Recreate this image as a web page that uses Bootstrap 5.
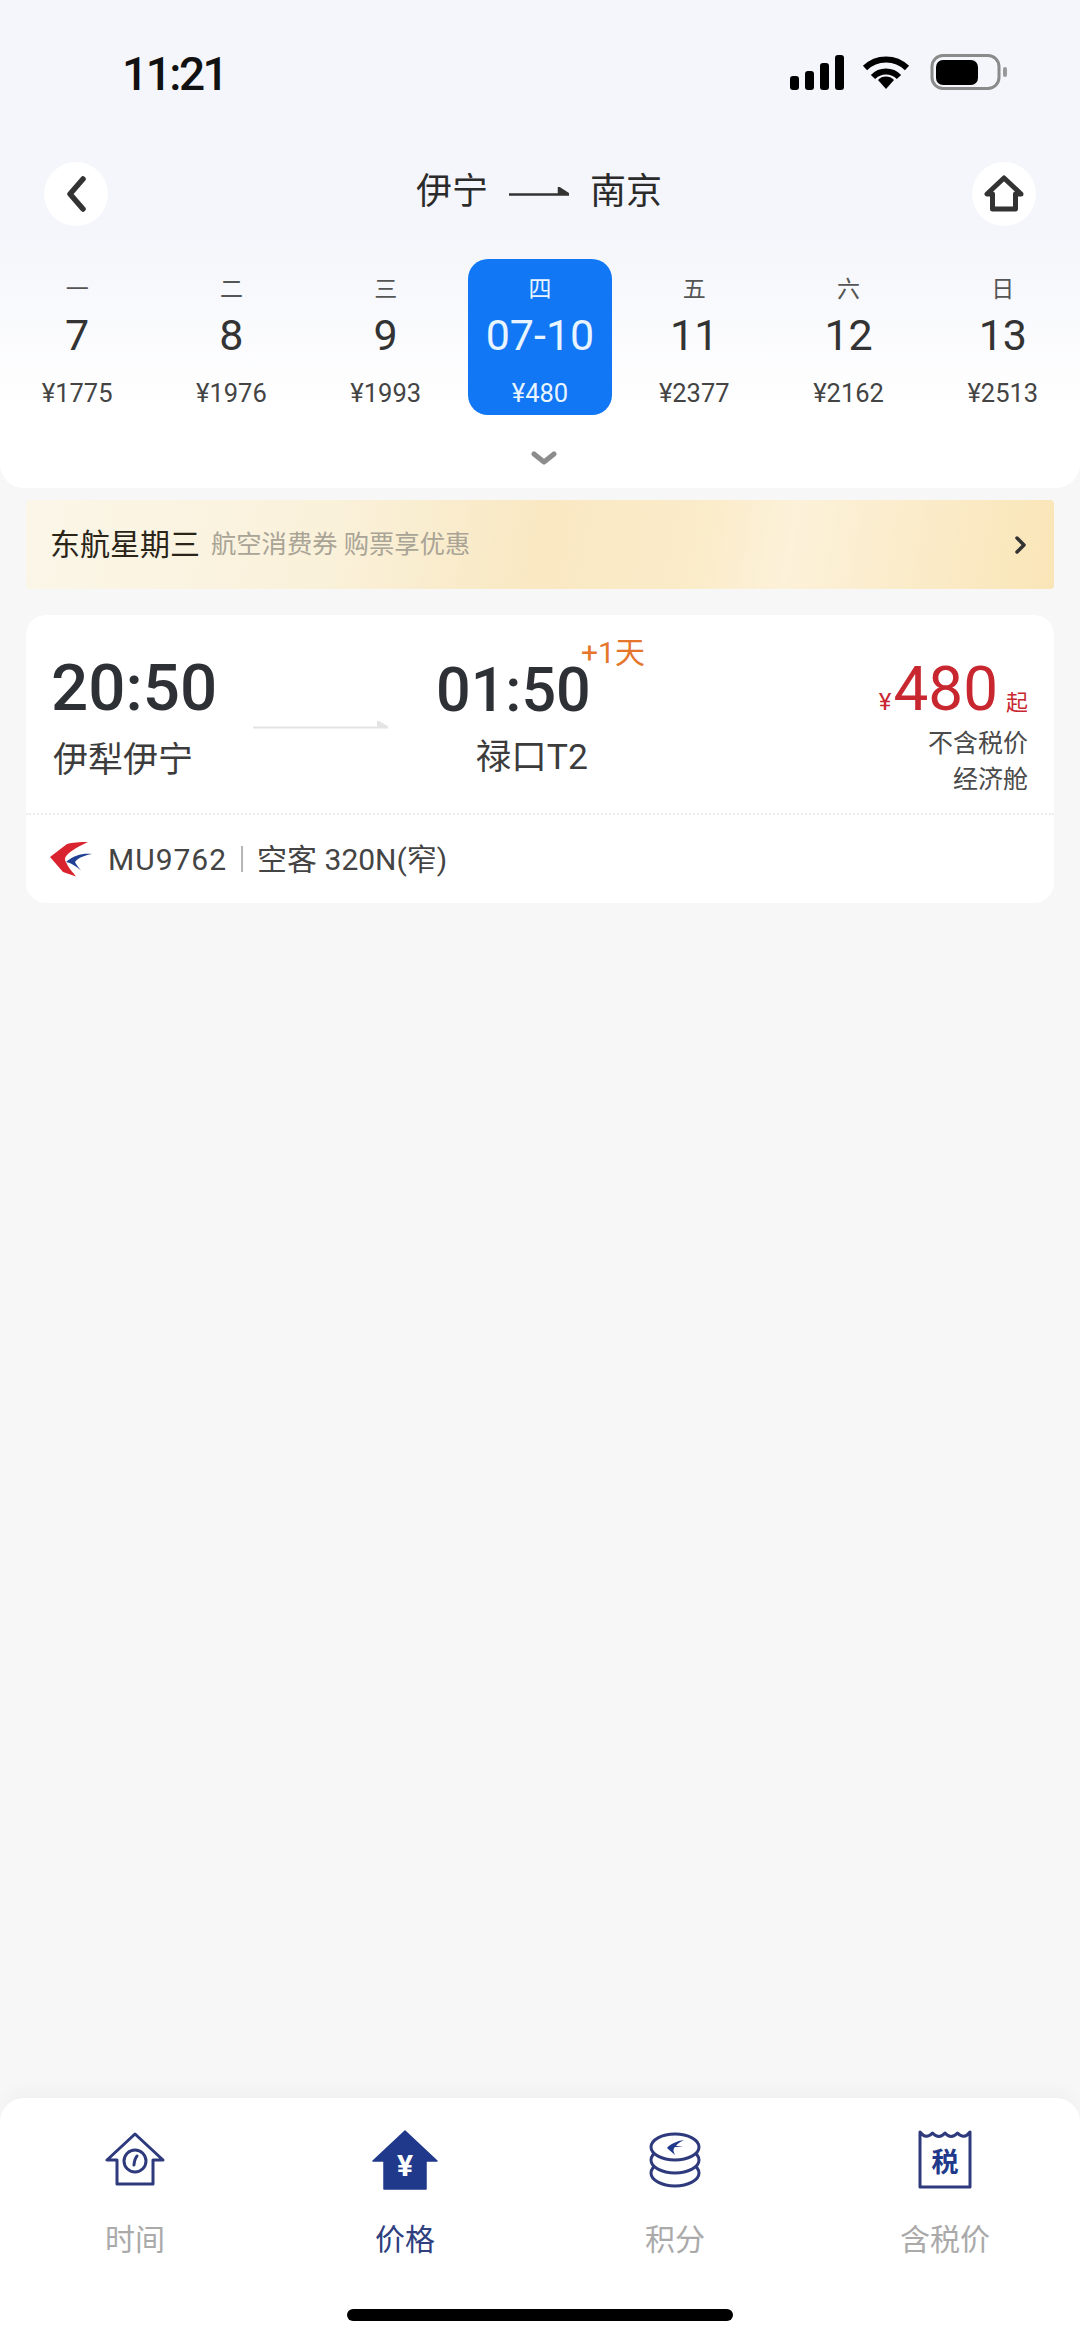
<!DOCTYPE html>
<html lang="zh-CN">
<head>
  <meta charset="UTF-8" />
  <meta name="viewport" content="width=device-width, initial-scale=1.0" />
  <title>航班列表</title>
  <link href="https://cdn.jsdelivr.net/npm/bootstrap@5.3.0/dist/css/bootstrap.min.css" rel="stylesheet">
  <style>
    body {
      font-family: Roboto, "Noto Sans CJK SC", sans-serif;
      background: #f7f7f7;
      color: #333;
    }
    .page-wrap { width: 1080px; height: 2342px; }

    /* header */
    .top-panel {
      background: linear-gradient(to bottom, #f5f6fb 0, #f5f6fb 240px, #ffffff 410px);
      border-radius: 0 0 24px 24px;
      padding-top: 54px;
      padding-bottom: 25px;
    }
    .status-row { height: 36px; padding-left: 122px; padding-right: 73px; }
    .status-time { font-size: 46px; font-weight: 500; line-height: 36px; color: #111; letter-spacing: -2.5px; margin-top: 3px; }
    .nav-row { height: 64px; margin-top: 72px; padding: 0 44px; }
    .round-btn { width: 64px; height: 64px; border-radius: 50%; background: #fff; }
    .route-title { font-size: 36px; line-height: 44px; color: #2b2b2b; gap: 21px; margin-top: -4px; margin-left: -2px; }

    /* dates */
    .date-row { margin-top: 33px; }
    .date-item { width: 144px; height: 156px; margin: 0 auto; border-radius: 20px; padding-top: 20px; text-align: center; }
    .date-item.is-on { background: #1277f4; color: #fff; }
    .date-week { font-size: 23px; line-height: 22px; color: #555; }
    .date-num { font-size: 43px; line-height: 44px; margin-top: 12px; color: #333; white-space: nowrap; }
    .date-price { font-size: 25.5px; line-height: 30px; margin-top: 21px; color: #444; }
    .is-on .date-week, .is-on .date-num, .is-on .date-price { color: #e8f4ff; }
    .more-row { height: 12px; margin-top: 36px; padding-left: 8px; }

    /* promo */
    .promo-bar {
      height: 89px;
      margin: 12px 26px 0;
      padding: 0 27px 0 24px;
      border-radius: 4px;
      background: linear-gradient(100deg, #fbf6e8 0, #faf1da 30%, #f9e8c2 50%, #fbecca 66%, #fcf1d9 74%, #f9e5b7 100%);
    }
    .promo-main { font-size: 30px; color: #2a2419; }
    .promo-sub { font-size: 25.3px; color: #a9a496; margin-left: 11px; }

    /* flight card */
    .flight-box { height: 288px; margin: 26px 26px 0; background: #fff; border-radius: 20px; }
    .flight-top { height: 200px; padding: 38px 26px 0 25px; border-bottom: 2px dotted #ececec; }
    .depart-col { width: 202px; }
    .time-big { font-size: 65.5px; line-height: 70px; font-weight: 500; color: #2d3035; white-space: nowrap; }
    .depart-name { font-size: 35px; line-height: 44px; margin-top: 16px; margin-left: 2px; color: #3c3c3c; }
    .arrow-col { width: 135px; margin-top: 68px; }
    .arrive-col { width: 152px; margin-left: 48px; margin-top: 2px; }
    .arrive-col .time-big { font-size: 61px; }
    .arrive-name { font-size: 35.5px; line-height: 44px; margin-top: 10px; color: #3c3c3c; white-space: nowrap; }
    .plus-day { position: absolute; left: 145px; top: -17px; font-size: 30px; line-height: 30px; color: #e5762b; white-space: nowrap; }
    .price-col { margin-top: 1px; color: #4a4a4a; }
    .price-main { height: 70px; line-height: 70px; color: #c8272f; white-space: nowrap; }
    .price-yen { font-size: 24px; }
    .price-num { font-size: 62px; margin-left: 2px; }
    .price-from { font-size: 22px; margin-left: 8px; }
    .price-note { font-size: 25px; line-height: 36px; }
    .price-note-first { margin-top: 2px; }
    .flight-info { height: 88px; padding-left: 24px; font-size: 30px; color: #444; }
    .info-num { letter-spacing: 1px; }
    .info-sep { width: 2px; height: 26px; background: #b5b5b5; margin: 0 14px; }

    /* bottom tabs */
    .tab-bar { height: 244px; background: #fff; border-radius: 24px 24px 0 0; box-shadow: 0 -10px 14px rgba(0,0,0,0.025); }
    .tab-icon { height: 60px; margin-top: 32px; }
    .tab-label { font-size: 30px; line-height: 36px; color: #aaa; margin-top: 32px; text-align: center; }
    .tab-label.is-on { color: #2f3f7f; }
    .home-bar { width: 386px; height: 12px; border-radius: 6px; background: #000; margin: 51px auto 0; }
    .tab-glyph { font-family: Roboto, "Noto Sans CJK SC", sans-serif; font-weight: 700; }
  </style>
</head>
<body>
  <div class="page-wrap d-flex flex-column">
    <div class="top-panel">
      <!-- status bar -->
      <div class="status-row d-flex justify-content-between align-items-center">
        <span class="status-time">11:21</span>
        <svg width="217" height="36" viewBox="0 0 217 36">
          <rect x="0" y="22" width="9" height="14" rx="3" fill="#000"/>
          <rect x="15" y="17" width="9" height="19" rx="3" fill="#000"/>
          <rect x="30" y="9" width="9" height="27" rx="3" fill="#000"/>
          <rect x="45" y="1" width="9" height="35" rx="3" fill="#000"/>
          <g transform="translate(72 1)" fill="none" stroke="#000" stroke-width="6">
            <path d="M3 13 A30 30 0 0 1 45 13"/>
            <path d="M11 22 A18 18 0 0 1 37 22"/>
            <path d="M24 34 L16 25 A11 11 0 0 1 32 25Z" fill="#000" stroke="none"/>
          </g>
          <rect x="142" y="1.5" width="67" height="33" rx="11" fill="none" stroke="#8a8a8a" stroke-width="3"/>
          <rect x="146" y="6" width="42" height="25" rx="7" fill="#000"/>
          <rect x="213" y="13" width="4" height="10" rx="2" fill="#9a9a9a"/>
        </svg>
      </div>

      <!-- nav -->
      <div class="nav-row d-flex justify-content-between align-items-center">
        <div class="round-btn d-flex align-items-center justify-content-center">
          <svg width="24" height="36" viewBox="0 0 24 36"><path d="M19 3 L6 18 L19 33" fill="none" stroke="#333" stroke-width="5.5" stroke-linecap="round" stroke-linejoin="round"/></svg>
        </div>
        <div class="route-title d-flex align-items-center">
          <span>伊宁</span>
          <svg width="60" height="10" viewBox="0 0 60 10"><path d="M0 7.5 H60 L50 1 V7.5" fill="#333" stroke="#333" stroke-width="2.5"/></svg>
          <span>南京</span>
        </div>
        <div class="round-btn d-flex align-items-center justify-content-center">
          <svg width="40" height="38" viewBox="0 0 40 38"><path d="M20 3 L3 19 H8.5 V34 H31.5 V19 H37 Z" fill="none" stroke="#333" stroke-width="5" stroke-linejoin="round"/></svg>
        </div>
      </div>

      <!-- date strip -->
      <div class="date-row row g-0" id="dates"></div>
      <div class="more-row d-flex justify-content-center">
        <svg width="26" height="14" viewBox="0 0 26 14" class="d-block"><path d="M3 3 L13 11 L23 3" fill="none" stroke="#8c8c8c" stroke-width="5" stroke-linecap="round" stroke-linejoin="round"/></svg>
      </div>
    </div>

    <!-- promo -->
    <div class="promo-bar d-flex align-items-center">
      <span class="promo-main">东航星期三</span>
      <span class="promo-sub">航空消费券 购票享优惠</span>
      <svg class="ms-auto" width="12" height="18" viewBox="0 0 12 18"><path d="M2 2 L9 9 L2 16" fill="none" stroke="#333" stroke-width="3.5" stroke-linecap="round" stroke-linejoin="round"/></svg>
    </div>

    <!-- flight -->
    <div class="flight-box">
      <div class="flight-top d-flex align-items-start">
        <div class="depart-col">
          <div class="time-big">20:50</div>
          <div class="depart-name">伊犁伊宁</div>
        </div>
        <div class="arrow-col">
          <svg width="135" height="8" viewBox="0 0 135 8" class="d-block"><path d="M0 6.5 H135 L125 0.5 V6.5" fill="#e4e4e4" stroke="#e4e4e4" stroke-width="2"/></svg>
        </div>
        <div class="arrive-col position-relative text-end">
          <div class="time-big">01:50</div>
          <div class="arrive-name">禄口T2</div>
          <span class="plus-day">+1天</span>
        </div>
        <div class="price-col ms-auto text-end">
          <div class="price-main"><span class="price-yen">¥</span><span class="price-num">480</span><span class="price-from">起</span></div>
          <div class="price-note price-note-first">不含税价</div>
          <div class="price-note">经济舱</div>
        </div>
      </div>
      <div class="flight-info d-flex align-items-center">
        <svg width="42" height="36" viewBox="0 0 42 36">
          <path d="M38 1 C30 1 22 1.5 17 3 L0 16 L13 31 L26 35.5 C22 30 18.5 27 17 23 C15 20 14.5 18 15.5 16 C18 12 25 7 38 1Z" fill="#d9232e"/>
          <path d="M42 13 C33 12 24 14 16 21 C21 22 26 25 31 29.5 C28 26 26 23 25 21 C28 17 34 14.5 42 13Z" fill="#1f3f94"/>
        </svg>
        <span class="info-num ms-3">MU9762</span>
        <span class="info-sep"></span>
        <span>空客 320N(窄)</span>
      </div>
    </div>

    <!-- tabs -->
    <div class="tab-bar mt-auto">
      <div class="row g-0">
        <div class="col-3">
          <div class="tab-icon d-flex justify-content-center align-items-center">
            <svg width="60" height="56" viewBox="0 0 60 56" fill="none" stroke="#2e3a7c" stroke-width="3" stroke-linejoin="round">
              <path d="M30 2 L2 28 H12 V52 H48 V28 H58 Z"/>
              <circle cx="30" cy="29" r="11"/>
              <path d="M29 33 Q29.5 27 32 24" stroke-linecap="round"/>
            </svg>
          </div>
          <div class="tab-label">时间</div>
        </div>
        <div class="col-3">
          <div class="tab-icon d-flex justify-content-center align-items-center">
            <svg width="66" height="60" viewBox="0 0 66 60">
              <path d="M33 1 L1 31 H12 V59 H54 V31 H65 Z" fill="#20398a" stroke="#20398a" stroke-width="1.5" stroke-linejoin="round"/>
              <text x="33" y="46" text-anchor="middle" font-size="30" fill="#fff" class="tab-glyph">¥</text>
            </svg>
          </div>
          <div class="tab-label is-on">价格</div>
        </div>
        <div class="col-3">
          <div class="tab-icon d-flex justify-content-center align-items-center">
            <svg width="52" height="56" viewBox="0 0 52 56" fill="#fff" stroke="#2e3a7c" stroke-width="3">
              <ellipse cx="26" cy="41" rx="24" ry="13"/>
              <ellipse cx="26" cy="28" rx="24" ry="13"/>
              <ellipse cx="26" cy="15" rx="24" ry="13"/>
              <path d="M35 8 C28 9 21 12 18 16 L26 23 C24 19 24 17 26 15 L34 15 C30 14 28 14 27 14 C28 12 31 10 35 8Z" fill="#20398a" stroke="none"/>
            </svg>
          </div>
          <div class="tab-label">积分</div>
        </div>
        <div class="col-3">
          <div class="tab-icon d-flex justify-content-center align-items-center">
            <svg width="54" height="60" viewBox="0 0 54 60">
              <path d="M2 2 Q8 10 14.5 3 Q21 10 27 3 Q33 10 39.5 3 Q46 10 52 2 V57 H2 Z" fill="#fff" stroke="#2e3a7c" stroke-width="3" stroke-linejoin="round"/>
              <text x="27" y="42" text-anchor="middle" font-size="27" fill="#20398a" class="tab-glyph">税</text>
            </svg>
          </div>
          <div class="tab-label">含税价</div>
        </div>
      </div>
      <div class="home-bar"></div>
    </div>
  </div>

  <script src="https://cdn.jsdelivr.net/npm/bootstrap@5.3.0/dist/js/bootstrap.bundle.min.js"></script>
  <script>
    const days = [
      ["一", "7", "¥1775"],
      ["二", "8", "¥1976"],
      ["三", "9", "¥1993"],
      ["四", "07-10", "¥480", true],
      ["五", "11", "¥2377"],
      ["六", "12", "¥2162"],
      ["日", "13", "¥2513"]
    ];
    document.getElementById("dates").innerHTML = days.map(function (d) {
      return '<div class="col"><div class="date-item' + (d[3] ? ' is-on' : '') + '">' +
        '<div class="date-week">' + d[0] + '</div>' +
        '<div class="date-num">' + d[1] + '</div>' +
        '<div class="date-price">' + d[2] + '</div>' +
        '</div></div>';
    }).join("");
  </script>
</body>
</html>
